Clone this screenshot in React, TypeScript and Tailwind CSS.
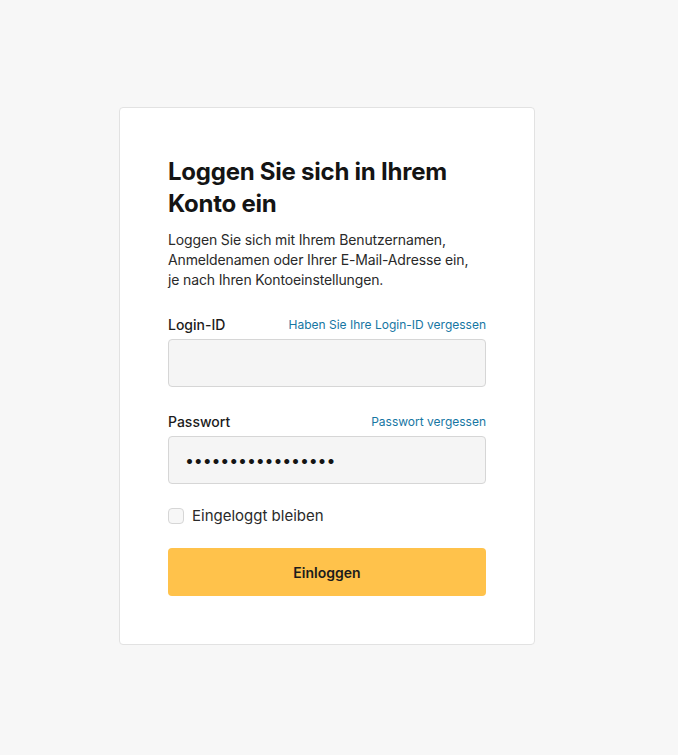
export default function App() {
  return (
    <div className="min-h-screen bg-[#f7f7f7] pt-[107px] pl-[119px] pb-[110px] font-['Inter','Noto_Sans',sans-serif] text-[#1c1c1c]">
      <div className="w-[416px] rounded-[4px] border border-[#e2e2e2] bg-white px-12 py-12">
        <h1 className="text-[24px] font-bold leading-8 tracking-[-0.01em] text-[#141414]">
          Loggen Sie sich in Ihrem Konto ein
        </h1>
        <p className="mt-2.5 max-w-[306px] text-[14px] leading-5 tracking-[-0.01em] text-[#2a2a2a]">
          Loggen Sie sich mit Ihrem Benutzernamen, Anmeldenamen oder Ihrer E-Mail-Adresse ein, je nach Ihren Kontoeinstellungen.
        </p>

        <div className="mt-[25px]">
          <div className="flex items-center justify-between">
            <label className="text-[14px] font-medium leading-5 text-[#1c1c1c]">Login-ID</label>
            <a className="text-[12px] leading-5 text-[#1676a3]">Haben Sie Ihre Login-ID vergessen</a>
          </div>
          <input
            type="text"
            className="mt-1 block h-12 w-full rounded-[4px] border border-[#d6d6d6] bg-[#f5f5f5] px-4 outline-none"
          />
        </div>

        <div className="mt-[25px]">
          <div className="flex items-center justify-between">
            <label className="text-[14px] font-medium leading-5 text-[#1c1c1c]">Passwort</label>
            <a className="text-[12px] leading-5 text-[#1676a3]">Passwort vergessen</a>
          </div>
          <input
            type="password"
            defaultValue="passwortpasswort1"
            className="mt-1 block h-12 w-full rounded-[4px] border border-[#d6d6d6] bg-[#f5f5f5] px-4 text-[16px] tracking-[-0.01em] text-[#141414] outline-none"
          />
        </div>

        <label className="mt-6 flex items-center gap-2">
          <span className="block h-4 w-4 rounded-[4px] border border-[#d6d6d6] bg-[#f7f7f7]" />
          <span className="text-[15px] leading-4 text-[#2a2a2a]">Eingeloggt bleiben</span>
        </label>

        <button className="mt-6 block h-12 w-full rounded-[4px] bg-[#ffc24b] text-[14px] font-semibold text-[#1c1c1c]">
          Einloggen
        </button>
      </div>
    </div>
  );
}
